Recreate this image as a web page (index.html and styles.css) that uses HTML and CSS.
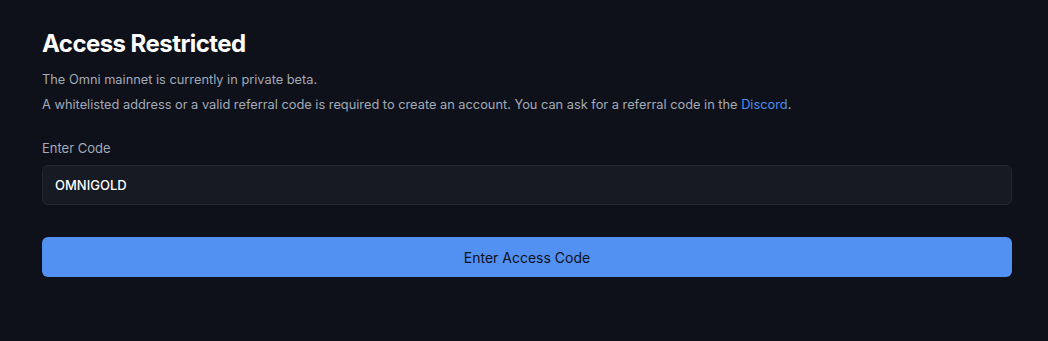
FILE: index.html
```html
<!DOCTYPE html>
<html lang="en">
<head>
    <meta charset="UTF-8">
    <meta name="viewport" content="width=device-width, initial-scale=1.0">
    <title>Access Restricted</title>
    <link rel="stylesheet" href="styles.css">
</head>
<body>
    <div class="container">
        <h1>Access Restricted</h1>
        <p class="note">The Omni mainnet is currently in private beta.</p>
        <p class="note">A whitelisted address or a valid referral code is required to create an account. You can ask for a referral code in the <a href="#">Discord</a>.</p>
        <form class="code-form">
            <label for="code">Enter Code</label>
            <input type="text" id="code" class="code-input" value="OMNIGOLD">
            <button type="button" class="submit-btn">Enter Access Code</button>
        </form>
    </div>
</body>
</html>
```

FILE: styles.css
```css
* {
    margin: 0;
    padding: 0;
    box-sizing: border-box;
}

body {
    font-family: Inter, 'Noto Sans', sans-serif;
    background: #0e111a;
    color: #ffffff;
    min-height: 100vh;
}

.container {
    padding: 28px 36px 0 42px;
}

h1 {
    font-size: 24px;
    font-weight: 700;
    line-height: 32px;
    margin-bottom: 10px;
    letter-spacing: -0.55px;
}

.note {
    font-size: 12.8px;
    line-height: 20px;
    color: #a3aab8;
    margin-bottom: 5px;
}

.note a {
    color: #4f8ff0;
    text-decoration: none;
}

.code-form {
    display: flex;
    flex-direction: column;
    margin-top: 23px;
}

label {
    font-size: 13px;
    line-height: 20px;
    color: #a3aab8;
    margin-bottom: 7px;
}

.code-input {
    height: 40px;
    padding: 0 12px;
    background: #161a23;
    border: 1px solid #232733;
    border-radius: 6px;
    color: #ffffff;
    font-family: inherit;
    font-size: 13px;
    font-weight: 500;
    outline: none;
}

.submit-btn {
    height: 40px;
    margin-top: 32px;
    background: #5290f2;
    border: none;
    border-radius: 6px;
    color: #0e111a;
    font-family: inherit;
    font-size: 14px;
    cursor: pointer;
}
```
